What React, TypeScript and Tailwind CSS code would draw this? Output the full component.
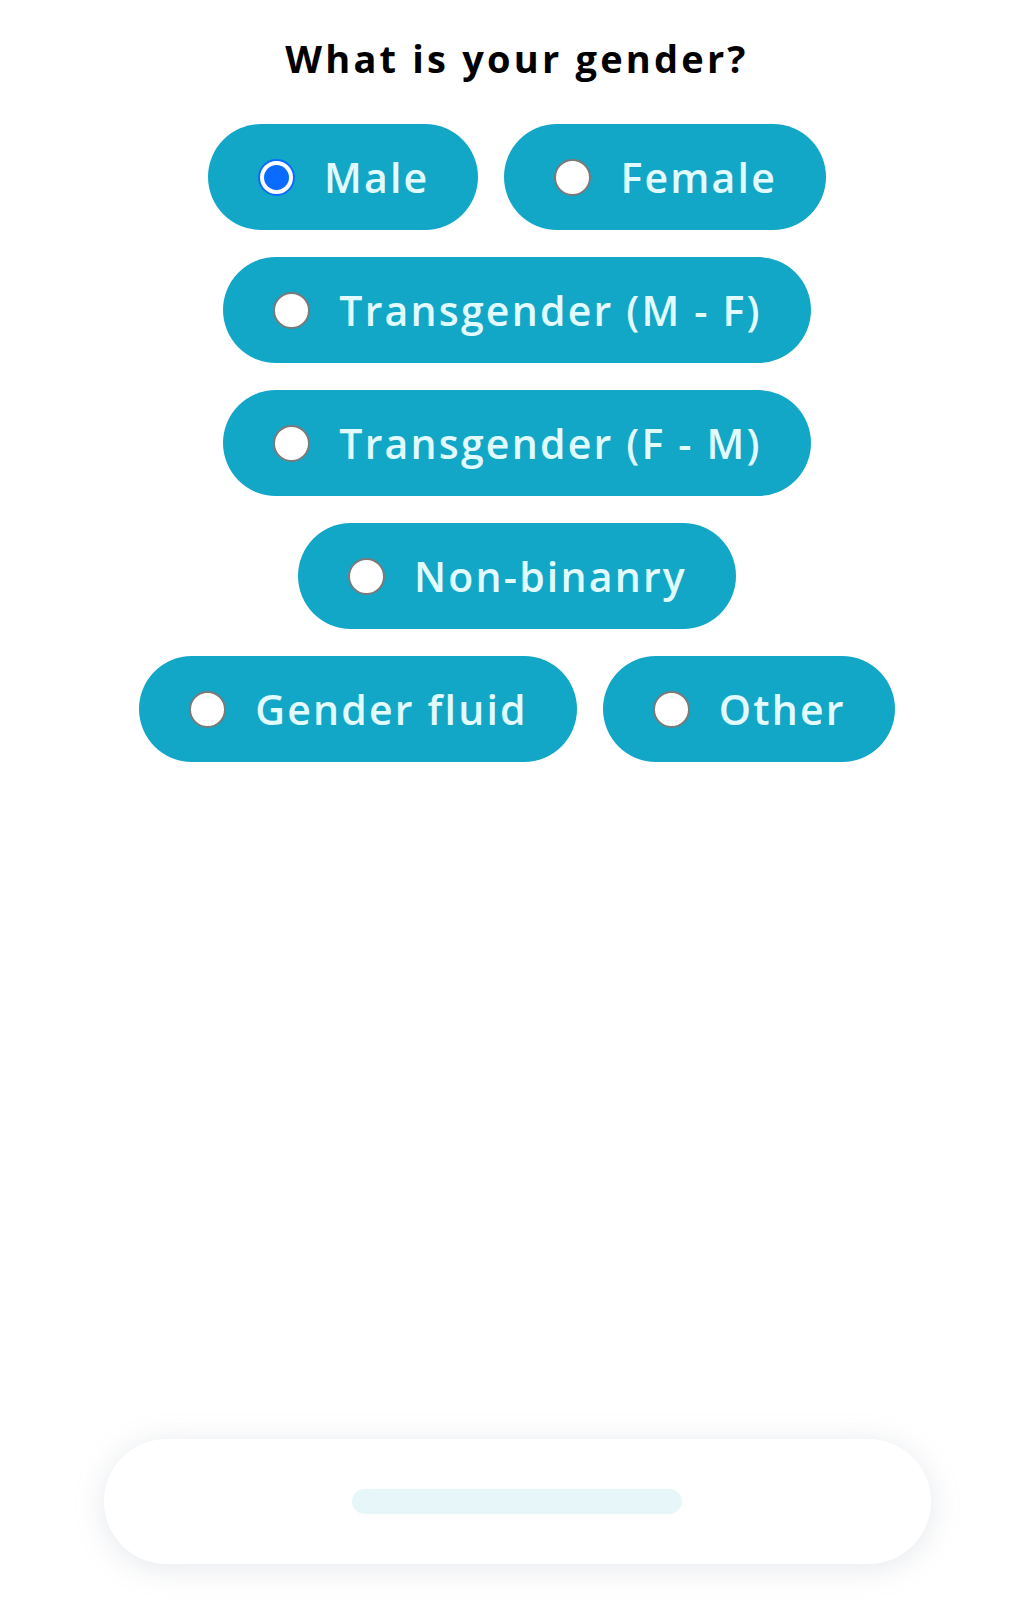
import { useState } from 'react';

const OPTIONS = [
  'Male',
  'Female',
  'Transgender (M - F)',
  'Transgender (F - M)',
  'Non-binanry',
  'Gender fluid',
  'Other',
];

export default function App() {
  const [selected, setSelected] = useState('Male');

  return (
    <div
      className="flex min-h-[1600px] w-full flex-col items-center bg-white"
      style={{ fontFamily: '"Open Sans", "Noto Sans", sans-serif' }}
    >
      <h1 className="mt-[32px] text-[38px] leading-[52px] font-bold tracking-[3.2px] text-black">
        What is your gender?
      </h1>

      <div className="mt-[40px] flex w-[780px] flex-wrap justify-center gap-x-[26px] gap-y-[27px]">
        {OPTIONS.map((option) => (
          <GenderOption
            key={option}
            label={option}
            checked={selected === option}
            onSelect={() => setSelected(option)}
          />
        ))}
      </div>

      <div className="mt-auto mb-[36px] flex h-[125px] w-[827px] items-center justify-center rounded-full bg-white shadow-[0_4px_30px_rgba(140,150,170,0.22)]">
        <div className="h-[25px] w-[330px] rounded-full bg-[#e6f6f9]" />
      </div>
    </div>
  );
}

interface GenderOptionProps {
  label: string;
  checked: boolean;
  onSelect: () => void;
}

function GenderOption({ label, checked, onSelect }: GenderOptionProps) {
  return (
    <button
      type="button"
      onClick={onSelect}
      className="flex h-[106px] items-center gap-[29px] rounded-full bg-[#12a6c7] pr-[49px] pl-[50px]"
    >
      {checked ? (
        <span className="flex h-[37px] w-[37px] items-center justify-center rounded-full border-[2px] border-[#0a6cff] bg-white">
          <span className="h-[25px] w-[25px] rounded-full bg-[#0a6cff]" />
        </span>
      ) : (
        <span className="h-[37px] w-[37px] rounded-full border-[2px] border-[#7a7a7a] bg-white" />
      )}
      <span className="text-[41px] leading-none font-semibold tracking-[2.2px] text-[#e2fbff]">
        {label}
      </span>
    </button>
  );
}
